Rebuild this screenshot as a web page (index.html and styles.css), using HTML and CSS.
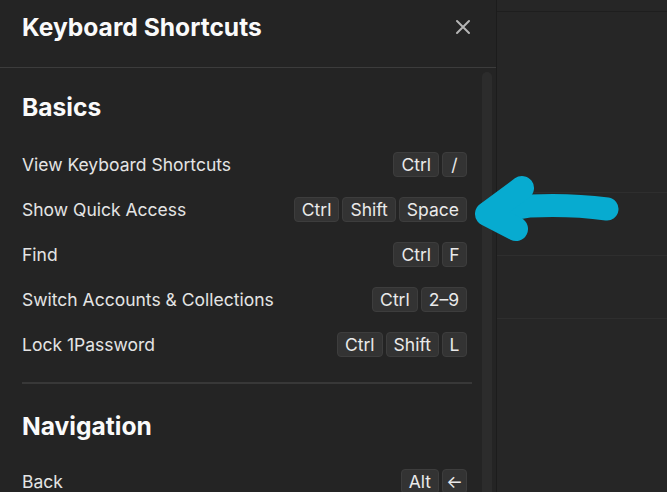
FILE: index.html
```html
<!DOCTYPE html>
<html lang="en">
<head>
    <meta charset="UTF-8">
    <meta name="viewport" content="width=device-width, initial-scale=1.0">
    <title>Keyboard Shortcuts</title>
    <link rel="stylesheet" href="styles.css">
</head>
<body>
    <div class="app">
        <div class="panel">
            <div class="panel-header">
                <h1>Keyboard Shortcuts</h1>
                <button class="close-button" aria-label="Close">
                    <svg width="16" height="16" viewBox="0 0 16 16"><path d="M2 2L14 14M14 2L2 14" stroke="#b5b5b5" stroke-width="2" stroke-linecap="round"/></svg>
                </button>
            </div>
            <div class="panel-body">
                <div class="shortcuts">
                    <section class="group">
                        <h2>Basics</h2>
                        <div class="row"><span>View Keyboard Shortcuts</span><span class="keys"><kbd>Ctrl</kbd><kbd class="single">/</kbd></span></div>
                        <div class="row"><span>Show Quick Access</span><span class="keys"><kbd>Ctrl</kbd><kbd>Shift</kbd><kbd>Space</kbd></span></div>
                        <div class="row"><span>Find</span><span class="keys"><kbd>Ctrl</kbd><kbd class="single">F</kbd></span></div>
                        <div class="row"><span>Switch Accounts &amp; Collections</span><span class="keys"><kbd>Ctrl</kbd><kbd>2–9</kbd></span></div>
                        <div class="row"><span>Lock 1Password</span><span class="keys"><kbd>Ctrl</kbd><kbd>Shift</kbd><kbd class="single">L</kbd></span></div>
                    </section>
                    <hr class="divider">
                    <section class="group">
                        <h2>Navigation</h2>
                        <div class="row"><span>Back</span><span class="keys"><kbd>Alt</kbd><kbd class="single">←</kbd></span></div>
                    </section>
                </div>
                <div class="scrollbar"></div>
            </div>
        </div>
        <div class="backdrop">
            <div class="backdrop-row top"></div>
            <div class="backdrop-row tall"></div>
            <div class="backdrop-row"></div>
            <div class="backdrop-row"></div>
        </div>
        <svg class="arrow" width="180" height="80" viewBox="470 170 180 80">
            <path d="M607 209 Q570 204 530 206 L488 213" fill="none" stroke="#07abd0" stroke-width="23" stroke-linecap="round" stroke-linejoin="round"/>
            <path d="M522 188 L487 214 L516 229" fill="none" stroke="#07abd0" stroke-width="24" stroke-linecap="round" stroke-linejoin="round"/>
        </svg>
    </div>
</body>
</html>
```

FILE: styles.css
```css
body {
    margin: 0;
    padding: 0;
    background-color: #262626;
    font-family: 'Inter', 'Roboto', sans-serif;
    color: #e4e4e4;
}
.app {
    position: relative;
    display: flex;
    height: 492px;
    overflow: hidden;
}
.panel {
    width: 496px;
    background: #242424;
    border-right: 1px solid #1c1c1c;
    display: flex;
    flex-direction: column;
}
.panel-header {
    flex-shrink: 0;
    height: 68px;
    box-sizing: border-box;
    padding: 0 22px;
    display: flex;
    align-items: center;
    justify-content: space-between;
    border-bottom: 1px solid #3c3c3c;
}
h1 {
    margin: 0 0 14px;
    font-size: 24.6px;
    font-weight: 700;
    color: #fafafa;
}
.close-button {
    background: none;
    border: none;
    padding: 0;
    margin: 0 3px 14px 0;
    display: flex;
    cursor: pointer;
}
.panel-body {
    flex: 1;
    min-height: 0;
    overflow: hidden;
    display: flex;
}
.shortcuts {
    flex: 1;
    padding: 24px 15px 0 22px;
}
.scrollbar {
    width: 10px;
    margin: 4px 4px 0 0;
    background: #2c2c2c;
    border-radius: 5px 5px 0 0;
}
h2 {
    margin: 0 0 20px;
    font-size: 24.6px;
    line-height: 30px;
    font-weight: 700;
    color: #fafafa;
}
.divider + .group h2 {
    margin-bottom: 18px;
}
.row {
    height: 45px;
    display: flex;
    align-items: center;
    justify-content: space-between;
    font-size: 17.5px;
}
.keys {
    display: flex;
    gap: 3px;
}
kbd {
    font-family: inherit;
    font-size: 17.5px;
    color: #eaeaea;
    background: #333333;
    border: 1px solid #3d3d3d;
    border-radius: 4px;
    height: 25px;
    box-sizing: border-box;
    padding: 0 7px;
    display: flex;
    align-items: center;
    justify-content: center;
}
kbd.single {
    width: 25px;
    padding: 0;
}
.divider {
    border: none;
    height: 2px;
    background: #383838;
    margin: 15px -5px 27px 0;
}
.backdrop {
    flex: 1;
    background: #262626;
}
.backdrop-row {
    height: 62px;
    border-bottom: 1px solid #2e2e2e;
}
.backdrop-row.top {
    height: 11px;
    border-bottom-color: #1e1e1e;
}
.backdrop-row.tall {
    height: 180px;
}
.arrow {
    position: absolute;
    left: 470px;
    top: 170px;
}
```
